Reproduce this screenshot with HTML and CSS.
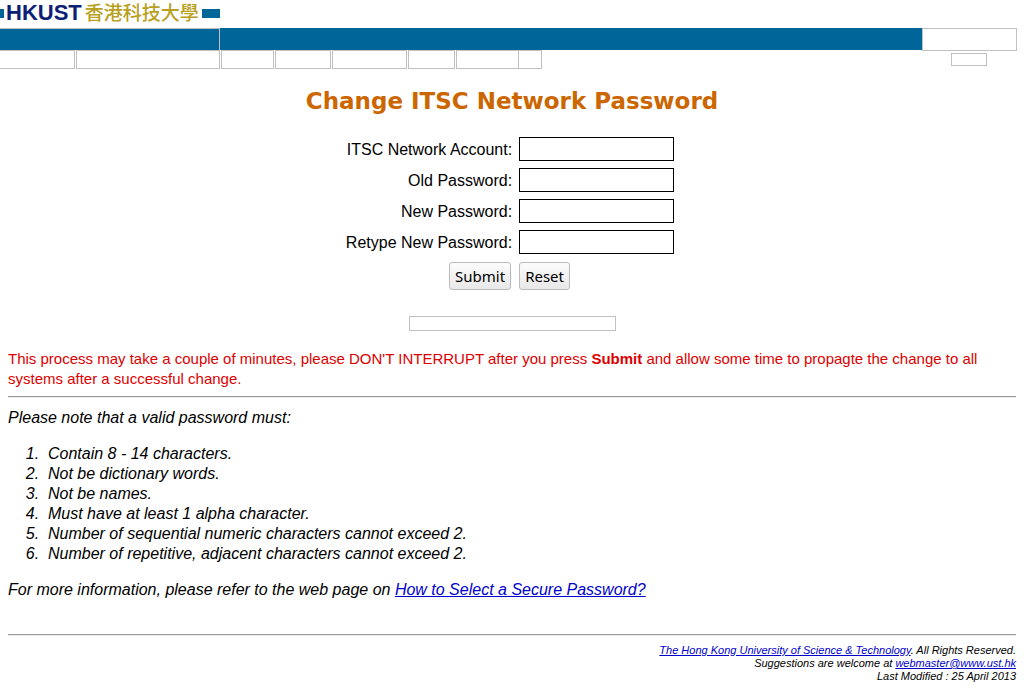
FILE: index.html
```html
<!DOCTYPE html>
<html lang="en">
<head>
<meta charset="utf-8">
<title>Change ITSC Network Password</title>
<link rel="stylesheet" href="styles.css">
</head>
<body>
<header>
  <div class="logo">
    <span class="logo-bar logo-bar-start"></span>
    <span class="logo-name">HKUST</span>
    <span class="logo-chinese" lang="zh-Hant">香港科技大學</span>
    <span class="logo-bar"></span>
  </div>
  <div class="banner">
    <div class="banner-title"></div>
    <div class="banner-fill"></div>
    <div class="banner-end"></div>
  </div>
  <div class="nav-row">
    <nav class="nav">
      <span class="tab tab-first"></span>
      <span class="tab tab-wide"></span>
      <span class="tab tab-small"></span>
      <span class="tab tab-medium"></span>
      <span class="tab tab-large"></span>
      <span class="tab tab-short"></span>
      <span class="tab tab-split"></span>
      <span class="tab tab-end"></span>
    </nav>
    <span class="side-box"></span>
  </div>
</header>
<main>
  <h1>Change ITSC Network Password</h1>
  <form class="form">
    <label for="account">ITSC Network Account:</label>
    <input class="field" id="account" type="text">
    <label for="old">Old Password:</label>
    <input class="field" id="old" type="password">
    <label for="new">New Password:</label>
    <input class="field" id="new" type="password">
    <label for="retype">Retype New Password:</label>
    <input class="field" id="retype" type="password">
    <button class="button button-submit" type="submit">Submit</button>
    <button class="button button-reset" type="reset">Reset</button>
  </form>
  <div class="status"></div>
  <p class="warning">This process may take a couple of minutes, please DON'T INTERRUPT after you press <b>Submit</b> and allow some time to propagte the change to all systems after a successful change.</p>
  <hr>
  <section class="rules">
    <p>Please note that a valid password must:</p>
    <ol>
      <li>Contain 8 - 14 characters.</li>
      <li>Not be dictionary words.</li>
      <li>Not be names.</li>
      <li>Must have at least 1 alpha character.</li>
      <li>Number of sequential numeric characters cannot exceed 2.</li>
      <li>Number of repetitive, adjacent characters cannot exceed 2.</li>
    </ol>
    <p>For more information, please refer to the web page on <a href="#">How to Select a Secure Password?</a></p>
  </section>
</main>
<footer>
  <hr>
  <div class="footer-text">
    <div><a href="#">The Hong Kong University of Science &amp; Technology</a>. All Rights Reserved.</div>
    <div>Suggestions are welcome at <a href="#">webmaster@www.ust.hk</a></div>
    <div>Last Modified : 25 April 2013</div>
  </div>
</footer>
</body>
</html>
```
FILE: styles.css
```css
@counter-style spaced-decimal {
  system: extends decimal;
  suffix: ".\a0\a0";
}

* { box-sizing: border-box; }
body {
  margin: 0;
  background: #fff;
  color: #000;
  font: 16px/20px "Liberation Sans", Arial, sans-serif;
}
a { color: #0000cc; }
hr {
  height: 2px;
  margin: 0;
  border: 0;
  border-top: 1px solid #999;
  border-bottom: 1px solid #eee;
}

.logo {
  display: flex;
  align-items: center;
  height: 28px;
  padding-bottom: 2px;
}
.logo-bar { width: 18px; height: 9px; background: #006699; }
.logo-bar-start { width: 4px; margin-right: 2px; }
.logo-name { color: #0c2074; font-size: 22px; font-weight: bold; }
.logo-chinese {
  margin: 0 3px;
  padding-bottom: 2px;
  color: #b8a020;
  font: 500 19px/22px "Noto Sans CJK TC", sans-serif;
}

.banner { display: flex; height: 22px; margin-right: 7px; }
.banner-title {
  width: 220px;
  background: #006699;
  border: solid #c0c0c0;
  border-width: 1px 1px 0 0;
}
.banner-fill { flex: 1; background: #006699; }
.banner-end { width: 95px; height: 23px; border: 1px solid #c0c0c0; }

.nav-row { display: flex; justify-content: space-between; padding-right: 37px; }
.nav { display: flex; gap: 1px; }
.tab { height: 19px; border: 1px solid #c0c0c0; }
.tab-first { width: 75px; border-left: 0; }
.tab-wide { width: 144px; }
.tab-small { width: 53px; }
.tab-medium { width: 56px; }
.tab-large { width: 75px; }
.tab-short { width: 47px; }
.tab-split { width: 63px; }
.tab-end { width: 24px; margin-left: -2px; }
.side-box { width: 36px; height: 13px; margin-top: 3px; border: 1px solid #c0c0c0; }

main { padding: 0 8px; }
h1 {
  margin: 16px 0 20px;
  color: #cc6600;
  font: bold 23px/32px "DejaVu Sans", Verdana, sans-serif;
  text-align: center;
}
.form {
  display: grid;
  grid-template-columns: auto 155px;
  gap: 7px;
  justify-content: center;
  align-items: center;
  justify-items: end;
  padding-right: 4px;
}
.form label { padding-top: 2px; }
.field {
  width: 100%;
  height: 24px;
  padding: 1px 4px;
  border: 1px solid #000;
  background: #fff;
  font: inherit;
}
.button {
  height: 28px;
  margin-top: 1px;
  padding: 0 5px;
  border: 1px solid #bbb;
  border-radius: 3px;
  background: linear-gradient(#fcfcfc, #e8e8e8);
  color: #000;
  font: 15px/24px "Noto Sans", Tahoma, sans-serif;
}
.button-submit { margin-right: 1px; }
.button-reset { justify-self: start; }
.status {
  width: 207px;
  height: 15px;
  margin: 26px auto 18px;
  border: 1px solid #c0c0c0;
}
.warning { margin: 0 0 7px; color: #dd0000; font-size: 15px; }
.rules { font-style: italic; }
.rules p { margin: 10px 0 16px; }
.rules ol { margin: 0; padding-left: 40px; list-style-type: spaced-decimal; }
.rules ol + p { margin: 16px 0 0; }
footer { padding: 34px 8px 8px; }
.footer-text {
  margin-top: 8px;
  font-size: 11px;
  line-height: 13px;
  font-style: italic;
  text-align: right;
}
```
